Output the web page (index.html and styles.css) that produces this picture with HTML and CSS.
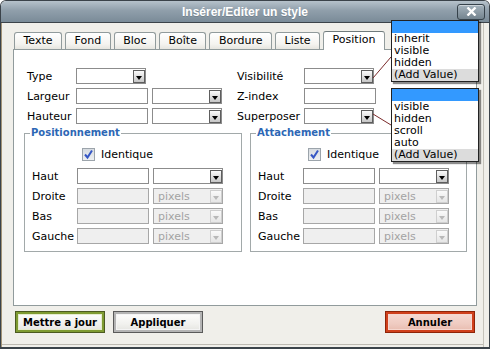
FILE: index.html
```html
<!DOCTYPE html>
<html lang="fr">
<head>
    <meta charset="UTF-8">
    <title>Insérer/Editer un style</title>
    <link rel="stylesheet" href="styles.css">
</head>
<body>
<div class="window">
    <div class="titlebar">
        <span class="title">Insérer/Editer un style</span>
        <span class="close">
            <svg width="11" height="9" viewBox="0 0 11 9"><path d="M1.5 0.5 L9.5 8.5 M9.5 0.5 L1.5 8.5" stroke="#fff" stroke-width="2.4"/></svg>
        </span>
    </div>

    <div class="body">
        <div class="tabs">
            <span class="tab">Texte</span>
            <span class="tab">Fond</span>
            <span class="tab">Bloc</span>
            <span class="tab">Boîte</span>
            <span class="tab">Bordure</span>
            <span class="tab">Liste</span>
            <span class="tab tab-active">Position</span>
        </div>

        <div class="panel">
            <div class="props">
                <div class="col col-left">
                    <div class="row"><span class="lbl">Type</span><span class="combo"><span></span><span class="arrow"></span></span></div>
                    <div class="row"><span class="lbl">Largeur</span><span class="field"></span><span class="combo"><span></span><span class="arrow"></span></span></div>
                    <div class="row"><span class="lbl">Hauteur</span><span class="field"></span><span class="combo"><span></span><span class="arrow"></span></span></div>
                </div>
                <div class="col col-right">
                    <div class="row"><span class="lbl">Visibilité</span><span class="combo"><span></span><span class="arrow"></span></span></div>
                    <div class="row"><span class="lbl">Z-index</span><span class="field"></span></div>
                    <div class="row"><span class="lbl">Superposer</span><span class="combo"><span></span><span class="arrow"></span></span></div>
                </div>
            </div>

            <div class="groups">
                <fieldset class="group">
                    <legend>Positionnement</legend>
                    <div class="checkrow">
                        <span class="check"><svg width="11" height="11" viewBox="0 0 11 11"><path d="M2 5.5 L4.5 8.5 L9 1.5" fill="none" stroke="#3657c4" stroke-width="2"/></svg></span>
                        <span>Identique</span>
                    </div>
                    <div class="frows">
                        <div class="row"><span class="lbl">Haut</span><span class="field"></span><span class="combo"><span></span><span class="arrow"></span></span></div>
                        <div class="row"><span class="lbl">Droite</span><span class="field off"></span><span class="combo off"><span>pixels</span><span class="arrow"></span></span></div>
                        <div class="row"><span class="lbl">Bas</span><span class="field off"></span><span class="combo off"><span>pixels</span><span class="arrow"></span></span></div>
                        <div class="row"><span class="lbl">Gauche</span><span class="field off"></span><span class="combo off"><span>pixels</span><span class="arrow"></span></span></div>
                    </div>
                </fieldset>
                <fieldset class="group group-narrow">
                    <legend>Attachement</legend>
                    <div class="checkrow">
                        <span class="check"><svg width="11" height="11" viewBox="0 0 11 11"><path d="M2 5.5 L4.5 8.5 L9 1.5" fill="none" stroke="#3657c4" stroke-width="2"/></svg></span>
                        <span>Identique</span>
                    </div>
                    <div class="frows">
                        <div class="row"><span class="lbl">Haut</span><span class="field"></span><span class="combo"><span></span><span class="arrow"></span></span></div>
                        <div class="row"><span class="lbl">Droite</span><span class="field off"></span><span class="combo off"><span>pixels</span><span class="arrow"></span></span></div>
                        <div class="row"><span class="lbl">Bas</span><span class="field off"></span><span class="combo off"><span>pixels</span><span class="arrow"></span></span></div>
                        <div class="row"><span class="lbl">Gauche</span><span class="field off"></span><span class="combo off"><span>pixels</span><span class="arrow"></span></span></div>
                    </div>
                </fieldset>
            </div>
        </div>

        <div class="buttons">
            <span class="btn btn-update">Mettre a jour</span>
            <span class="btn btn-apply">Appliquer</span>
            <span class="btn btn-cancel">Annuler</span>
        </div>
    </div>

    <!-- open drop-down lists -->
    <svg class="leaders" width="490" height="349">
        <path d="M372 77 L390 56 M372 113 L390 124" stroke="#7b2a2a" stroke-width="1" fill="none"/>
    </svg>
    <div class="popup popup-vis">
        <div class="opt opt-sel"></div>
        <div class="opt">inherit</div>
        <div class="opt">visible</div>
        <div class="opt">hidden</div>
        <div class="opt opt-add">(Add Value)</div>
    </div>
    <div class="popup popup-over">
        <div class="opt opt-sel"></div>
        <div class="opt">visible</div>
        <div class="opt">hidden</div>
        <div class="opt">scroll</div>
        <div class="opt">auto</div>
        <div class="opt opt-add">(Add Value)</div>
    </div>
</div>
</body>
</html>
```

FILE: styles.css
```css
* {
    box-sizing: border-box;
    margin: 0;
    padding: 0;
}

body {
    font-family: "DejaVu Sans", Verdana, sans-serif;
    font-size: 11px;
    color: #000;
    background: #fff;
}

.window {
    position: relative;
    width: 490px;
    height: 349px;
    border: 1px solid #3b434a;
    border-bottom-width: 2px;
    border-radius: 6px 6px 0 0;
    overflow: hidden;
    background: #f0efea;
    display: flex;
    flex-direction: column;
}

/* title bar */
.titlebar {
    height: 22px;
    flex: none;
    border-bottom: 1px solid #3b434a;
    background: linear-gradient(#b6c2cb, #909fab 45%, #7a8b98);
    display: grid;
    grid-template-columns: 1fr auto 1fr;
    align-items: center;
}

.title {
    grid-column: 2;
    font-family: "Liberation Sans", Arial, sans-serif;
    font-weight: bold;
    font-size: 12px;
    color: #fff;
    text-shadow: 0 1px 0 rgba(0, 0, 0, 0.15);
}

.close {
    grid-column: 3;
    justify-self: end;
    margin-right: 4px;
    width: 28px;
    height: 16px;
    border: 1px solid #36424b;
    border-radius: 3px;
    background: linear-gradient(#a4b2bc, #74848f);
    box-shadow: inset 0 1px 0 rgba(255, 255, 255, 0.45);
    display: flex;
    align-items: center;
    justify-content: center;
}

/* dialog body */
.body {
    flex: 1;
    padding: 8px 12px 0;
    box-shadow: inset 1px 0 0 #a39478, inset -5px 0 0 #f0efea, inset -6px 0 0 #c5c3bb,
                inset 0 -2px 0 #f0efea, inset 0 -3px 0 #bdbab2;
}

.tabs {
    display: flex;
    align-items: flex-end;
    height: 18px;
    padding-left: 1px;
    gap: 3px;
}

.tab {
    height: 17px;
    padding: 0 8.5px;
    border: 1px solid #919b9c;
    border-bottom: 0;
    border-radius: 3px 3px 0 0;
    background: linear-gradient(#ffffff, #f4f3ef 70%, #e6e5df);
    line-height: 16px;
}

.tab-active {
    position: relative;
    height: 19px;
    margin-bottom: -1px;
    border-top-color: #6f7a7c;
    background: #fff;
}

.panel {
    height: 257px;
    border: 1px solid #919b9c;
    background: #fff;
    padding: 18px 9px 0 10px;
}

.props {
    display: flex;
    padding-left: 3px;
}

.col {
    display: flex;
    flex-direction: column;
    gap: 4px;
}

.col-left {
    width: 210px;
}

.row {
    display: flex;
    align-items: center;
    height: 16px;
}

.lbl {
    flex: none;
    width: 49px;
}

.col-right .lbl {
    width: 67px;
}

.field {
    flex: none;
    width: 72px;
    height: 16px;
    border: 1px solid #8c8c8c;
    background: #fff;
}

.combo {
    flex: none;
    width: 70px;
    height: 16px;
    border: 1px solid #8c8c8c;
    background: #fff;
    padding-left: 4px;
    display: flex;
    align-items: center;
    justify-content: space-between;
}

.field + .combo {
    margin-left: 4px;
}

.arrow {
    width: 12px;
    height: 13px;
    margin-right: 0;
    border: 1px solid #5e5e5e;
    background: linear-gradient(#fbfbfb, #c6c6c6);
    display: flex;
    align-items: flex-end;
    justify-content: center;
    padding-bottom: 2px;
}

.arrow::after {
    content: "";
    border-top: 4px solid #000;
    border-left: 3.5px solid transparent;
    border-right: 3.5px solid transparent;
}

.field.off, .combo.off {
    background: #efefef;
    border-color: #a7a7a7;
}

.combo.off {
    color: #a3a3a3;
}

.combo.off .arrow {
    border-color: #cfcfcf;
    background: linear-gradient(#fafafa, #e6e6e6);
}

.combo.off .arrow::after {
    border-top-color: #b9b9b9;
}

/* Positionnement / Attachement */
.groups {
    display: flex;
    gap: 8px;
    margin-top: 3px;
}

.group {
    width: 218px;
    height: 125px;
    border: 1px solid #a2a9aa;
    padding: 0 0 0 7px;
}

.group-narrow {
    width: 217px;
}

.group legend {
    font-weight: bold;
    font-size: 10px;
    line-height: 12px;
    color: #2d67b5;
    padding: 0 1px;
    margin-left: -2px;
}

.group .lbl {
    width: 45px;
}

.checkrow {
    display: flex;
    align-items: center;
    gap: 6px;
    height: 13px;
    margin: 9px 0 0 50px;
}

.check {
    width: 13px;
    height: 13px;
    border: 1px solid #9ca4ab;
    background: linear-gradient(#d6dbe0, #eef0f2);
    display: flex;
    align-items: center;
    justify-content: center;
}

.frows {
    display: flex;
    flex-direction: column;
    gap: 4px;
    margin-top: 7px;
}

/* bottom buttons */
.buttons {
    display: flex;
    gap: 8px;
    margin-top: 5px;
    padding: 0 2px;
}

.btn {
    width: 90px;
    height: 22px;
    border: 1px solid #444;
    font-weight: bold;
    font-size: 10px;
    display: flex;
    align-items: center;
    justify-content: center;
    background: linear-gradient(#ffffff, #f1f1ee 60%, #e2e2de);
}

.btn-update {
    border-color: #4b5a20;
    box-shadow: inset 0 0 0 2px #7f9b32, inset 0 0 0 3px #e6eccf;
}

.btn-apply {
    border-color: #5a5a5a;
    box-shadow: inset 0 0 0 2px #b4b4b4, inset 0 0 0 3px #f4f4f4;
}

.btn-cancel {
    margin-left: auto;
    border-color: #8e2408;
    background: linear-gradient(#f7dcd5, #efcbc1 60%, #e6b8ab);
    box-shadow: inset 0 0 0 2px #d0401c, inset 0 0 0 3px #f5d7cf;
}

/* open lists over the form */
.leaders {
    position: absolute;
    left: 0;
    top: 0;
    pointer-events: none;
}

.popup {
    position: absolute;
    left: 390px;
    width: 88px;
    border: 1px solid #222;
    background: #fff;
    box-shadow: 2px 2px 1px rgba(0, 0, 0, 0.45);
}

.popup-vis {
    top: 19px;
}

.popup-over {
    top: 87px;
}

.opt {
    height: 12px;
    line-height: 12px;
    padding-left: 2px;
}

.opt-sel {
    background: #3399ff;
}

.opt-add {
    background: #dcdcdc;
}
```
